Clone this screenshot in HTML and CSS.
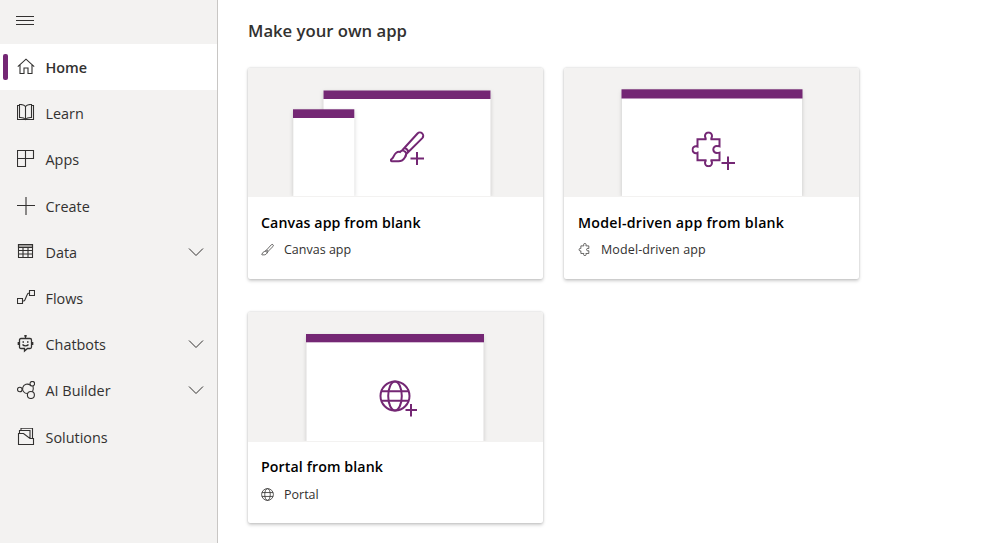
FILE: index.html
```html
<!DOCTYPE html>
<html lang="en">
<head>
<meta charset="utf-8">
<title>Make your own app</title>
<link rel="stylesheet" href="styles.css">
</head>
<body>
<svg class="defs" width="0" height="0">
  <symbol id="chevron" viewBox="0 0 16 16"><path d="M1 4.500l7 7 7-7"/></symbol>
  <symbol id="brush" viewBox="0 0 36 34"><path d="M13.500 20.500L28.500 4a3.300 3.300 0 0 1 4.800 4.600L17.300 24.500M11 22.500c2-2.200 4-1.400 5.200-.2s1.500 3.600-.2 5.500c-1.500 2.600-4 4-6.500 4H3c-1.200 0-1.500-1.600-.5-2.200 2.500-1.300 2-4.300 4.500-6.100 1.200-.9 2.600-1.400 4-1zM13.500 20.500l-2.500 2M17.300 24.500l-1.300 3M15.500 18.500c2.200.5 3.400 2 3.700 4"/></symbol>
  <symbol id="puzzle" viewBox="0 0 32 36"><path d="M6 8h8.200c.3-1-.7-1.700-.7-3.200a3.500 3.500 0 0 1 7 0c0 1.500-1 2.200-.7 3.200H28v7.200c-1-.3-1.500-.4-2.700-.4a3.500 3.500 0 0 0 0 7c1.200 0 1.700-.1 2.700-.4V29h-8.200c-.3 1 .7 1.200.7 2.500a3.500 3.500 0 0 1-7 0c0-1.300 1-1.500.7-2.500H6v-7.400c-.5.200-.8.400-1.500.4a3.400 3.400 0 0 1 0-7c.7 0 1 .2 1.500.4z"/></symbol>
  <symbol id="globe" viewBox="0 0 32 32"><circle cx="16" cy="16" r="14.500"/><ellipse cx="16" cy="16" rx="6.800" ry="14.500"/><path d="M2.300 11.200h27.400M2.300 20.800h27.400"/></symbol>
</svg>
<div class="app">
  <nav class="sidebar">
    <div class="menu"><svg class="burger" viewBox="0 0 18 10"><path d="M0 .5h18M0 4.500h18M0 8.500h18"/></svg></div>
    <a class="item active"><svg class="icon" viewBox="0 0 18 18"><path d="M.8 8.700L9 1.200l8.200 7.500M3 7v8.500h4V10h4v5.500h4V7"/></svg><span class="label">Home</span></a>
    <a class="item"><svg class="icon" viewBox="0 0 18 18"><path d="M2.500 1.500H.5v14h16v-14h-2M8.500 2.500c-1-1.300-3-2-5-2H2.500v13h1c2 0 4 .6 5 2 1-1.400 3-2 5-2h1V.5h-1c-2 0-4 .7-5 2zV15.500"/></svg><span class="label">Learn</span></a>
    <a class="item"><svg class="icon" viewBox="0 0 18 18"><path d="M.5.5h16v8H.5zM.5 8.500v8h8V.5"/></svg><span class="label">Apps</span></a>
    <a class="item"><svg class="icon" viewBox="0 0 18 18"><path d="M9 0v18M0 8.500h18"/></svg><span class="label low">Create</span></a>
    <a class="item"><svg class="icon" viewBox="0 0 18 18"><path class="head" d="M1.500 1.500h14v3h-14z"/><path d="M1.500 1.500h14v13h-14zM1.500 4.500h14M1.500 7.500h14M1.500 11h14M6 4.500v10M11 4.500v10"/></svg><span class="label low">Data</span><svg class="chev"><use href="#chevron"/></svg></a>
    <a class="item"><svg class="icon" viewBox="0 0 18 18"><path d="M.5 9.500h5v5h-5zM12.500 1.500h5v5h-5zM5.500 12h1c1 0 1.200-.6 1.600-1.500L10 6c.5-1.300.9-2 2-2h.5"/></svg><span class="label">Flows</span></a>
    <a class="item"><svg class="icon robot" viewBox="0 0 18 18"><path d="M4 3.500h9q1.500 0 1.500 1.500v7q0 1.500-1.500 1.500h-2.500L7.500 16v-2.500H4q-1.500 0-1.500-1.500V5Q2.500 3.500 4 3.500zM8.500 3.500V1M1.300 7v3M15.700 7v3M5.500 7H7M10 7h1.500M5.500 9.500c1.500 1.800 4.500 1.800 6 0"/><circle cx="8.500" cy=".8" r=".6"/></svg><span class="label">Chatbots</span><svg class="chev"><use href="#chevron"/></svg></a>
    <a class="item"><svg class="icon" viewBox="0 0 18 18"><circle cx="2.800" cy="8.500" r="2.300"/><circle cx="15.300" cy="2.700" r="2.300"/><circle cx="13.900" cy="14" r="3.500"/><path d="M13.300 4.200A4.700 4.700 0 1 0 10.700 12.500M16 4.900c.6 2.400.4 4-.5 5.800"/></svg><span class="label">AI Builder</span><svg class="chev"><use href="#chevron"/></svg></a>
    <a class="item"><svg class="icon" viewBox="0 0 18 18"><path d="M1.500 5.500v11h15v-6h-3.500L6.500 5.500zM2.500 5.500v-3h10.500v8M4 2.500V.3h11.500v10.200"/></svg><span class="label low">Solutions</span></a>
  </nav>
  <main class="main">
    <h1 class="title">Make your own app</h1>
    <div class="cards">
      <article class="card">
        <svg class="art" viewBox="0 0 295 129">
          <rect class="win" x="75.500" y="23" width="167" height="105"/><rect class="bar" x="75.500" y="22.500" width="167" height="8.500"/>
          <rect class="win" x="45.300" y="42" width="61" height="86"/><rect class="bar" x="45" y="41.300" width="61.300" height="8.700"/>
          <rect class="floor" x="0" y="128" width="295" height="1"/>
          <svg class="glyph" x="141" y="61.500" width="36" height="34"><use href="#brush"/></svg><path class="plus" d="M162.500 90.500h13.500M169 84v13"/>
        </svg>
        <div class="body"><h2 class="name">Canvas app from blank</h2><div class="kind"><svg class="mini"><use href="#brush"/></svg><span>Canvas app</span></div></div>
      </article>
      <article class="card model">
        <svg class="art" viewBox="0 0 295 129">
          <rect class="win" x="58" y="22" width="180" height="106"/><rect class="bar" x="57.500" y="21.300" width="181" height="9.200"/>
          <rect class="floor" x="0" y="128" width="295" height="1"/>
          <svg class="glyph" x="127.500" y="63.200" width="32" height="36"><use href="#puzzle"/></svg><path class="plus" d="M157.500 95h13.500M164 88.500v13.500"/>
        </svg>
        <div class="body"><h2 class="name">Model-driven app from blank</h2><div class="kind"><svg class="mini"><use href="#puzzle"/></svg><span>Model-driven app</span></div></div>
      </article>
      <article class="card portal">
        <svg class="art" viewBox="0 0 295 130">
          <rect class="win" x="58.500" y="23" width="177" height="107"/><rect class="bar" x="58" y="22" width="178" height="8.300"/>
          <rect class="floor" x="0" y="129" width="295" height="1"/>
          <svg class="glyph" x="131" y="68" width="32" height="32"><use href="#globe"/></svg><path class="plus" d="M157.500 98h11.500M163 92v12.500"/>
        </svg>
        <div class="body"><h2 class="name">Portal from blank</h2><div class="kind"><svg class="mini"><use href="#globe"/></svg><span>Portal</span></div></div>
      </article>
    </div>
  </main>
</div>
</body>
</html>
```

FILE: styles.css
```css
* { box-sizing: border-box; }
body { margin: 0; background: #fff; font-family: "Open Sans", "Noto Sans", sans-serif; overflow: hidden; }
svg { fill: none; flex: none; }
.defs { position: absolute; }
.app { display: flex; height: 543px; }
.sidebar { width: 218px; flex: none; background: #f3f2f1; border-right: 1px solid #c8c6c4; }
.menu { height: 44px; padding: 16px 0 0 16px; }
.burger { display: block; width: 18px; height: 10px; stroke: #323130; }
.item { display: flex; align-items: center; height: 46.2px; padding: 0 13px 0 17px; color: #323130; font-size: 14.4px; position: relative; }
.active { background: #fff; font-weight: 600; }
.active::before { content: ""; position: absolute; left: 3px; top: 10px; width: 5px; height: 26px; border-radius: 2px; background: #742774; }
.icon { width: 18px; height: 18px; margin-right: 10.5px; stroke: #323130; stroke-width: 1.1; }
.head { fill: #a19f9d; }
.robot { stroke-width: 1.3; }
.label { flex: 1; white-space: nowrap; }
.low { padding-top: 1.4px; }
.chev { width: 16px; height: 16px; stroke: #323130; }
.main { flex: 1; padding: 18px 0 0 30px; }
.title { margin: 0; height: 50px; line-height: 25px; font-size: 16.7px; font-weight: 600; color: #323130; white-space: nowrap; }
.cards { display: grid; grid-template-columns: 295px 295px; grid-auto-rows: 211px; gap: 33px 21px; }
.card { background: #fff; border-radius: 2px; box-shadow: 0 1.6px 3.600px rgba(0,0,0,.2), 0 0 2px rgba(0,0,0,.16); overflow: hidden; }
.art { display: block; width: 295px; height: 129px; background: #f3f2f1; }
.portal .art { height: 130px; }
.win { fill: #fff; filter: drop-shadow(0 1px 2px rgba(0,0,0,.18)); }
.bar { fill: #742774; }
.floor { fill: #f3f2f1; }
.glyph, .plus { stroke: #742774; stroke-width: 2; }
.body { padding: 15px 13px 0; }
.model .body { padding-left: 14px; }
.portal .body { padding-top: 14px; }
.name { margin: 0; font-size: 14.2px; letter-spacing: .1px; line-height: 22px; font-weight: 600; color: #000; white-space: nowrap; }
.model .name { letter-spacing: .25px; }
.kind { display: flex; align-items: center; height: 20px; margin-top: 5px; font-size: 12.5px; color: #323130; white-space: nowrap; }
.model .kind { letter-spacing: .12px; }
.portal .kind { margin-top: 6px; }
.mini { width: 13px; height: 13px; margin-right: 10px; stroke: #323130; stroke-width: 2; }
```
